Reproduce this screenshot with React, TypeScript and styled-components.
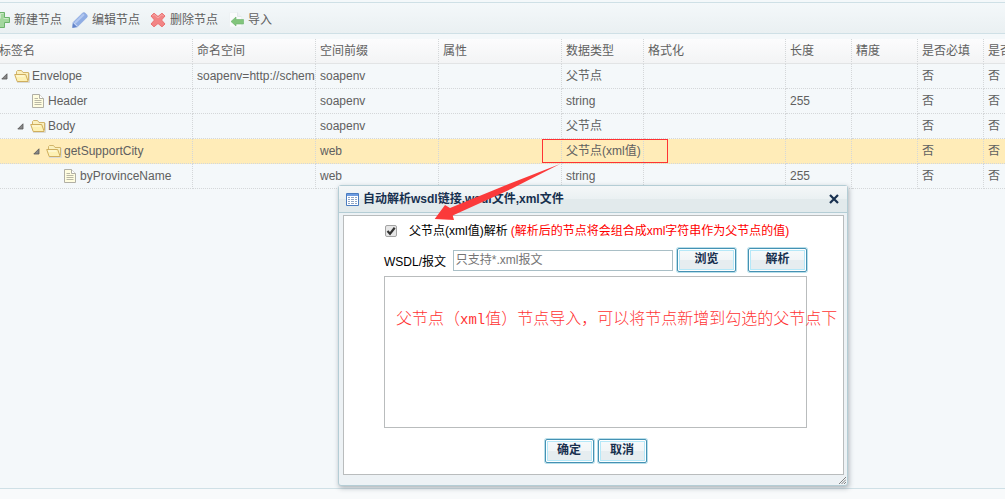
import React from 'react';
import styled, { createGlobalStyle, css } from 'styled-components';

const sans = '"Liberation Sans", "Noto Sans CJK SC", sans-serif';

const GlobalStyle = createGlobalStyle`
  * { box-sizing: border-box; }
  html, body { margin: 0; overflow: hidden; }
  body { background: #f4f8fa; font-family: ${sans}; font-size: 12px; color: #606060; }
  button, input, textarea { font-family: inherit; font-size: 12px; margin: 0; }
`;

const Page = styled.div`
  position: relative;
  display: flex;
  flex-direction: column;
  min-height: 100vh;
  padding-top: 2px;
  overflow: hidden;
`;

const Toolbar = styled.div`
  display: flex;
  align-items: center;
  gap: 9px;
  height: 32px;
  margin-bottom: 5px;
  margin-left: -8px;
  padding-left: 2px;
  border-top: 1px solid #cfe0e6;
  border-bottom: 1px solid #cfe0e6;
  background: linear-gradient(#f4f8fa, #eaf0f2);
`;

const ToolButton = styled.button`
  display: flex;
  align-items: center;
  gap: 4px;
  height: 24px;
  padding: 4px 1px 0 0;
  border: 0;
  background: none;
  color: #606060;
  line-height: 16px;
`;

const Grid = styled.table`
  margin-left: -5px;
  width: calc(100% + 49px);
  border-collapse: separate;
  border-spacing: 0;
  table-layout: fixed;
`;

const cell = css`
  height: 25px;
  padding: 0 0 0 4px;
  border-right: 1px dotted #d4d7d9;
  text-align: left;
  font-weight: normal;
  line-height: 16px;
  white-space: nowrap;
  overflow: hidden;
`;

const HeadCell = styled.th`
  ${cell}
  border-bottom: 1px solid #e2e4e5;
  background: linear-gradient(#fcfcfd, #f3f4f5);
`;

const Cell = styled.td`
  ${cell}
  border-bottom: 1px dotted #d4d7d9;
`;

const Row = styled.tr<{ $selected?: boolean }>`
  background: ${(p) => (p.$selected ? '#ffecb8' : 'transparent')};
`;

const TreeLabel = styled.div<{ $depth: number }>`
  display: flex;
  align-items: center;
  gap: 2px;
  padding-left: ${(p) => p.$depth * 16}px;
`;

const Expander = styled.span`
  display: flex;
  width: 13px;
  padding-left: 2px;
`;

const Footer = styled.footer`
  flex: 0 0 11px;
  margin-top: auto;
  border-top: 1px solid #cfe0e6;
  background: #f8fafb;
`;

const Dialog = styled.section`
  position: absolute;
  left: 338px;
  top: 185px;
  width: 510px;
  border: 1px solid #b4cdd5;
  border-radius: 3px;
  background: #edf2f5;
  box-shadow: 1px 2px 5px rgba(60, 70, 80, 0.4);
  color: #000;
`;

const DialogHeader = styled.header`
  display: flex;
  align-items: center;
  gap: 4px;
  height: 27px;
  padding: 0 8px 0 7px;
  border-bottom: 1px solid #b4cdd5;
  background: linear-gradient(#f4f7f8 0%, #eaf0f2 50%, #e2eaec 51%, #e2eaec 100%);
`;

const Title = styled.h2`
  flex: 1;
  margin: 0;
  color: #17304f;
  font-size: 12px;
  line-height: 16px;
`;

const CloseButton = styled.button`
  display: flex;
  padding: 0;
  border: 0;
  background: none;
`;

const DialogBody = styled.form`
  height: 260px;
  margin: 2px 3px 10px 4px;
  padding: 7px 36px 0 40px;
  border: 1px solid #b9bcbd;
  background: #fff;
`;

const CheckRow = styled.label`
  display: flex;
  align-items: center;
  height: 16px;
  line-height: 16px;
  white-space: nowrap;
`;

const Check = styled.input`
  appearance: none;
  width: 12px;
  height: 12px;
  margin: 0 12px 0 1px;
  border: 1px solid #a3a3a3;
  border-radius: 2px;
  background: #e6e6e6
    url("data:image/svg+xml,%3Csvg xmlns='http://www.w3.org/2000/svg' viewBox='0 0 10 10'%3E%3Cpath d='M1.5 5l2.5 2.7L8.7 1.8' fill='none' stroke='%23333' stroke-width='2.2'/%3E%3C/svg%3E")
    center / 10px 10px no-repeat;
`;

const Hint = styled.span`
  margin-left: 3px;
  color: #f00;
`;

const FileRow = styled.div`
  display: flex;
  align-items: center;
  height: 26px;
  margin: 8px 0 3px;
`;

const FieldLabel = styled.label`
  width: 69px;
  white-space: nowrap;
`;

const PathInput = styled.input`
  width: 221px;
  height: 21px;
  margin-right: 4px;
  padding: 0 2px;
  border: 1px solid #a9bfc6;
  background: #fff;
  &::placeholder { color: #757575; opacity: 1; }
`;

const ButtonGroup = styled.div`
  display: flex;
  gap: 12px;
`;

const Button = styled.button<{ $wide?: boolean }>`
  width: ${(p) => (p.$wide ? 59 : 49)}px;
  height: 24px;
  padding: 0 0 2px;
  border: 1px solid #4591b3;
  border-radius: 2px;
  background: linear-gradient(#f7fafb 0%, #f1f5f7 50%, #e6edf0 51%, #e6edf0 100%);
  box-shadow: 0 0 0 1px #b9dfea, inset 0 0 0 1px #fff, inset 0 0 0 2px #b5e8f8;
  color: #17304f;
  font-weight: bold;
  line-height: 16px;
`;

const ResultArea = styled.textarea`
  display: block;
  width: 423px;
  height: 152px;
  border: 1px solid #b9bcbd;
  resize: none;
  background: #fff;
`;

const Actions = styled.div`
  display: flex;
  justify-content: center;
  gap: 4px;
  padding-top: 11px;
`;

const Grip = styled.svg`
  position: absolute;
  right: 1px;
  bottom: 1px;
`;

const Highlight = styled.div`
  position: absolute;
  left: 542px;
  top: 139px;
  width: 126px;
  height: 24px;
  border: 1px solid #f33;
`;

const Arrow = styled.svg`
  position: absolute;
  left: 430px;
  top: 160px;
`;

const Note = styled.p`
  position: absolute;
  left: 396px;
  top: 305px;
  margin: 0;
  color: #f33;
  font: 16px/24px "Noto Sans CJK SC", sans-serif;
  font-weight: 300;
  white-space: nowrap;
`;

const Mono = styled.span`
  font-family: "Liberation Mono", monospace;
  font-size: 14px;
`;

const AddIcon = () => (
  <svg width="16" height="16" viewBox="0 0 16 16" aria-hidden="true">
    <path d="M5.500.5h5v5h5v5h-5v5h-5v-5h-5v-5h5z" fill="#a3d79e" stroke="#6cb36c" />
    <path d="M6.500 6.500v-5h3M9.500 6.500h5" stroke="#cdeac9" fill="none" />
  </svg>
);

const EditIcon = () => (
  <svg width="16" height="16" viewBox="0 0 16 16" aria-hidden="true">
    <path d="M1 10.500L10.500 1.200q1.500-1.200 2.800 0l1.500 1.500q1.200 1.400 0 2.800L5.200 15l-4.700.7z" fill="#8fade4" stroke="#86a2dc" strokeWidth=".6" />
    <path d="M3 11L12 2.200" stroke="#b3c8f1" strokeWidth="2" />
    <path d="M1 11.500l3.700 3.300-4.200.9z" fill="#6283c8" />
    <path d="M1.700 10.500l4 4" stroke="#d3dff6" />
  </svg>
);

const DeleteIcon = () => (
  <svg width="16" height="16" viewBox="0 0 16 16" aria-hidden="true">
    <path d="M4 1.200L8 4.500l4-3.300L15 4 11.500 8l3.500 4-3 2.800L8 11.500l-4 3.300L1 12l3.500-4L1 4z" fill="#f28585" stroke="#ea7070" strokeLinejoin="round" />
    <path d="M2.500 4L4 2.500 8 6l4-3.500L13.500 4" stroke="#f8abab" fill="none" />
  </svg>
);

const ImportIcon = () => (
  <svg width="16" height="16" viewBox="0 0 16 16" aria-hidden="true">
    <path d="M1.500.5h8l4 4V15h-12z" fill="#fafbfc" stroke="#eef2f4" />
    <path d="M9.500.5v4h4" fill="#edf1f3" stroke="#e3e8eb" />
    <path d="M3 9.500l5-4.500v2.500h7.500v4.500H8V14z" fill="#82c57c" stroke="#6cb36c" strokeWidth=".6" />
  </svg>
);

const FolderIcon = () => (
  <svg width="16" height="16" viewBox="0 0 16 16" aria-hidden="true">
    <path d="M3 14.500h12.500V5" fill="none" stroke="#d9dad8" />
    <path d="M2.500 8V3.500l1-1h4l1.500 2h5.500v8" fill="#fbf0bd" stroke="#d2b56b" />
    <path d="M.7 6.500h11l2.500 7H3.200z" fill="#fdf1b4" stroke="#cfae5e" strokeLinejoin="round" />
    <path d="M2.200 8h8.200" stroke="#fffbe3" />
  </svg>
);

const FileIcon = () => (
  <svg width="16" height="16" viewBox="0 0 16 16" aria-hidden="true">
    <path d="M2.500 1.500h7l4 4v9h-11z" fill="#fffde0" stroke="#b0afa5" />
    <path d="M9.500 1.500v4h4" fill="#fff" stroke="#b0afa5" />
    <path d="M4.500 5.500H8M4.500 7.500h7M4.500 9.500h7M4.500 11.500h7" stroke="#b9b8a6" />
  </svg>
);

const Triangle = () => (
  <svg width="7" height="7" viewBox="0 0 7 7" aria-hidden="true">
    <path d="M6 .8V6H.8z" fill="#888" stroke="#555" strokeWidth=".8" />
  </svg>
);

const TableIcon = () => (
  <svg width="13" height="13" viewBox="0 0 13 13" aria-hidden="true">
    <path d="M.5.5h12v12H.5z" fill="#fff" stroke="#4a7cc0" />
    <path d="M1 1h11v2H1z" fill="#6c9be0" />
    <path d="M2 4.500h9M2 6.500h9M2 8.500h9M2 10.500h9" stroke="#8fa6c6" />
    <path d="M4.500 3v9M8.500 3v9" stroke="#fff" />
  </svg>
);

const columns = [
  { title: '标签名', width: 198 },
  { title: '命名空间', width: 123 },
  { title: '空间前缀', width: 123 },
  { title: '属性', width: 123 },
  { title: '数据类型', width: 82 },
  { title: '格式化', width: 142 },
  { title: '长度', width: 66 },
  { title: '精度', width: 66 },
  { title: '是否必填', width: 66 },
  { title: '是否', width: undefined },
];

interface TreeNode {
  name: string;
  depth: number;
  leaf?: boolean;
  ns?: string;
  prefix: string;
  type: string;
  length?: string;
  selected?: boolean;
}

const nodes: TreeNode[] = [
  { name: 'Envelope', depth: 0, ns: 'soapenv=http://schem', prefix: 'soapenv', type: '父节点' },
  { name: 'Header', depth: 1, leaf: true, prefix: 'soapenv', type: 'string', length: '255' },
  { name: 'Body', depth: 1, prefix: 'soapenv', type: '父节点' },
  { name: 'getSupportCity', depth: 2, prefix: 'web', type: '父节点(xml值)', selected: true },
  { name: 'byProvinceName', depth: 3, leaf: true, prefix: 'web', type: 'string', length: '255' },
];

export default function App() {
  return (
    <Page>
      <GlobalStyle />
      <Toolbar>
        <ToolButton><AddIcon />新建节点</ToolButton>
        <ToolButton><EditIcon />编辑节点</ToolButton>
        <ToolButton><DeleteIcon />删除节点</ToolButton>
        <ToolButton><ImportIcon />导入</ToolButton>
      </Toolbar>
      <Grid>
        <colgroup>
          {columns.map((c) => <col key={c.title} width={c.width} />)}
        </colgroup>
        <thead>
          <tr>{columns.map((c) => <HeadCell key={c.title}>{c.title}</HeadCell>)}</tr>
        </thead>
        <tbody>
          {nodes.map((n) => (
            <Row key={n.name} $selected={n.selected}>
              <Cell>
                <TreeLabel $depth={n.depth}>
                  <Expander>{!n.leaf && <Triangle />}</Expander>
                  {n.leaf ? <FileIcon /> : <FolderIcon />}
                  {n.name}
                </TreeLabel>
              </Cell>
              <Cell>{n.ns}</Cell>
              <Cell>{n.prefix}</Cell>
              <Cell />
              <Cell>{n.type}</Cell>
              <Cell />
              <Cell>{n.length}</Cell>
              <Cell />
              <Cell>否</Cell>
              <Cell>否</Cell>
            </Row>
          ))}
        </tbody>
      </Grid>
      <Footer />
      <Dialog role="dialog" aria-labelledby="dialog-title">
        <DialogHeader>
          <TableIcon />
          <Title id="dialog-title">自动解析wsdl链接,wsdl文件,xml文件</Title>
          <CloseButton aria-label="关闭">
            <svg width="10" height="10" viewBox="0 0 10 10">
              <path d="M1 1l8 8M9 1L1 9" stroke="#17304f" strokeWidth="2.200" />
            </svg>
          </CloseButton>
        </DialogHeader>
        <DialogBody onSubmit={(e) => e.preventDefault()}>
          <CheckRow>
            <Check type="checkbox" defaultChecked />
            父节点(xml值)解析
            <Hint>(解析后的节点将会组合成xml字符串作为父节点的值)</Hint>
          </CheckRow>
          <FileRow>
            <FieldLabel htmlFor="path">WSDL/报文</FieldLabel>
            <PathInput id="path" placeholder="只支持*.xml报文" />
            <ButtonGroup>
              <Button type="button" $wide>浏览</Button>
              <Button type="button" $wide>解析</Button>
            </ButtonGroup>
          </FileRow>
          <ResultArea aria-label="报文" />
          <Actions>
            <Button type="submit">确定</Button>
            <Button type="button">取消</Button>
          </Actions>
        </DialogBody>
        <Grip width="7" height="7" viewBox="0 0 7 7" aria-hidden="true">
          <path d="M0 7L7 0M2.500 7L7 2.500M5 7l2-2" stroke="#777" strokeWidth=".9" />
        </Grip>
      </Dialog>
      <Highlight />
      <Arrow width="134" height="62" viewBox="0 0 134 62" aria-hidden="true">
        <path d="M130 4L80 23.500 20 48 15 45 4.700 59 24 60 22.700 55.500 82 28.500z" fill="#fb3a3a" />
      </Arrow>
      <Note>父节点（<Mono>xml</Mono>值）节点导入，可以将节点新增到勾选的父节点下</Note>
    </Page>
  );
}
